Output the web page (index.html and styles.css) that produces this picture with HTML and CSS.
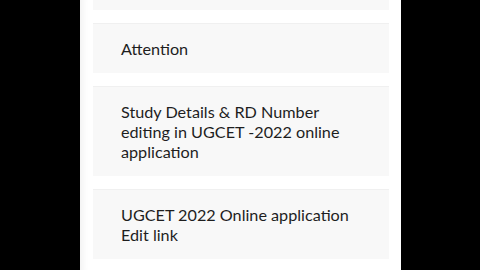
FILE: index.html
```html
<!DOCTYPE html>
<html lang="en">
  <head>
    <meta charset="UTF-8" />
    <meta name="viewport" content="width=device-width, initial-scale=1.0" />
    <title>UGCET Updates</title>
    <link rel="stylesheet" href="styles.css">
  </head>
  <body>
    <div class="page">
      <div class="postList">
        <div class="postCard postTail"></div>
        <div class="postCard">Attention</div>
        <div class="postCard">Study Details &amp; RD Number editing in UGCET -2022 online application</div>
        <div class="postCard">UGCET 2022 Online application Edit link</div>
        <div class="postCard"></div>
      </div>
    </div>
  </body>
</html>
```

FILE: styles.css
```css
body {
  margin: 0;
  background-color: #000;
  font-family: Lato, "Open Sans", sans-serif;
}

.page {
  width: 321px;
  height: 270px;
  margin-left: 80px;
  background-color: #fff;
  overflow: hidden;
  box-shadow: inset 9px 0 6px -6px #f2f2f2;
}

.postList {
  display: flex;
  flex-direction: column;
  gap: 13px;
  padding: 0 12px 0 13px;
}

.postCard {
  padding: 15px 28px 14px;
  background-color: #f8f8f8;
  border-top: 1px solid #f0f0f0;
  color: #1e1e1e;
  font-size: 16.2px;
  line-height: 20px;
}

.postTail {
  height: 10px;
  padding: 0;
  border-top: none;
}
```
